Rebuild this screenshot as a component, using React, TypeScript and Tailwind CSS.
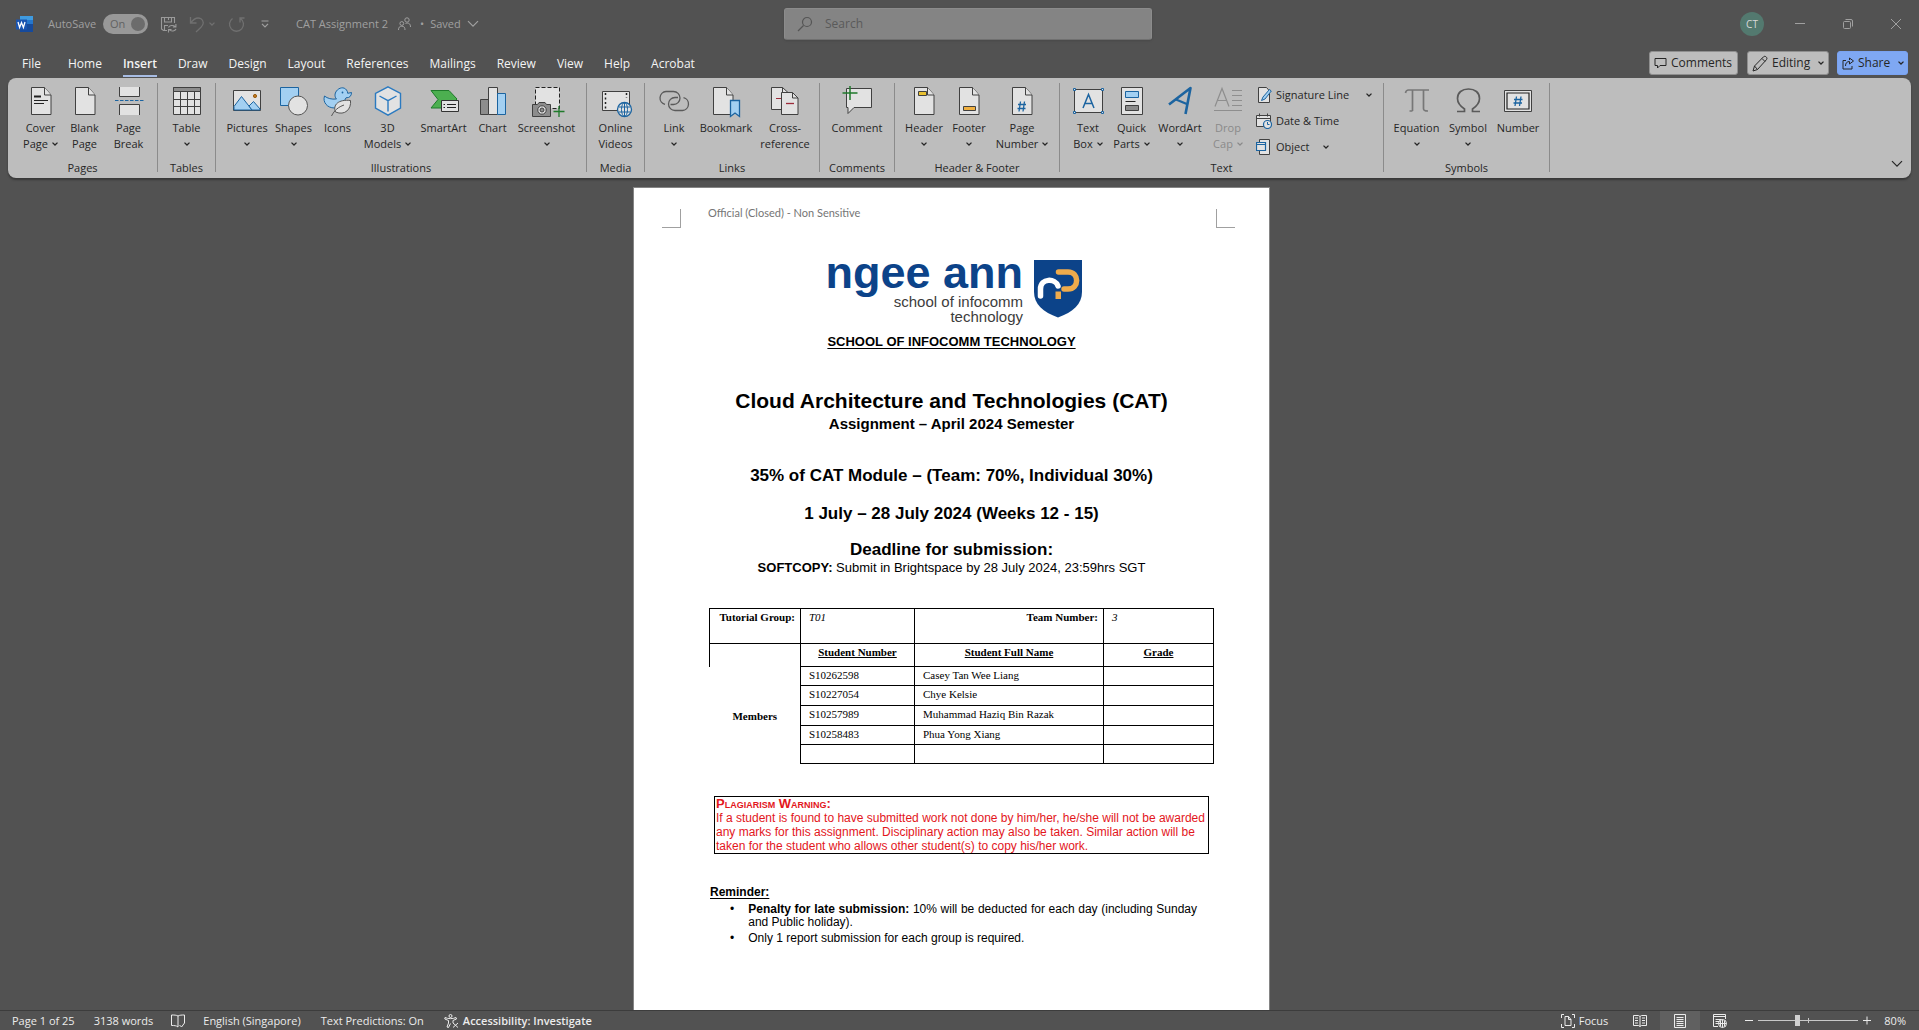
import type { ReactNode } from "react";

const INK = "#404040";
const PAPER = "#e2e2e2";
const BLUE = "#1c64a0";
const SKY = "#a3d0f2";

function Chevron({ className = "" }: { className?: string }) {
  return (
    <svg width="6" height="4" viewBox="0 0 6 4" fill="none" stroke="currentColor" strokeWidth="1.3" className={"shrink-0 " + className} aria-hidden="true">
      <path d="M.5 .6 3 3 5.500 .6" />
    </svg>
  );
}

function WideChevron() {
  return (
    <svg width="12" height="8" viewBox="0 0 12 8" fill="none" stroke="currentColor" strokeWidth="1.2" aria-hidden="true">
      <path d="M1 1.2 6 6.2 11 1.2" />
    </svg>
  );
}

function Art({ children }: { children: ReactNode }) {
  return (
    <svg width="32" height="30" viewBox="0 0 32 30" fill="none" stroke={INK} strokeWidth="1" aria-hidden="true" className="shrink-0 overflow-visible">
      {children}
    </svg>
  );
}

function Sheet({ x = 6 }: { x?: number }) {
  return (
    <g transform={`translate(${x} 0)`}>
      <path d="M.5 1.5h13l6.5 7.5v19.5H.5z" fill={PAPER} />
      <path d="M13.5 1.5V9H20" fill={PAPER} />
    </g>
  );
}

const art = {
  cover: (
    <Art>
      <Sheet />
      <path d="M9 10.5h7" stroke="#222" strokeWidth="2" />
      <path d="M9 14.5h14M9 17.5h10" stroke="#222" />
    </Art>
  ),
  blank: (
    <Art>
      <Sheet />
    </Art>
  ),
  pageBreak: (
    <Art>
      <path d="M6.500 1v9.500h20V1M6.500 29V18.500h20V29" fill={PAPER} />
      <path d="M2 14.500h29" stroke={BLUE} strokeDasharray="3.500 1.500" />
    </Art>
  ),
  table: (
    <Art>
      <path d="M2.500 1.500h27v27h-27z" fill={PAPER} />
      <path d="M2.500 1.500h27v4h-27z" fill="#8c8c8c" />
      <path d="M2.500 13.500h27M2.500 20.500h27M9.500 5.500v23M16.500 5.500v23M23.500 5.500v23" />
    </Art>
  ),
  pictures: (
    <Art>
      <path d="M2.500 4.500h27v20h-27z" fill={PAPER} />
      <path d="M3 20.500 10.500 10.500 21 24H3z" fill={SKY} stroke={BLUE} />
      <path d="M18 20 22.500 15.500 29 23V24H21z" fill={SKY} stroke={BLUE} />
      <circle cx="24" cy="10" r="1.600" fill="#c07a20" stroke="#9a5c10" />
    </Art>
  ),
  shapes: (
    <Art>
      <path d="M2.500 1.500h18v18h-18z" fill={SKY} stroke={BLUE} />
      <circle cx="20" cy="19.500" r="9.500" fill={PAPER} stroke="#555" />
    </Art>
  ),
  icons: (
    <Art>
      <path d="M2.500 10c3 2.500 7 3.500 12 3-2-2-2-5.500 0-8 2.500-3.500 7.500-4.500 10-1 .8 1 1.200 2.200 1.200 3.300L29.500 6.500c0 3.500-2 5.500-5.500 5.300-1 2-1.500 2.500-2 4C21 20 17 22 12.500 22 5 22 .5 16 2.500 10z" fill={SKY} stroke={BLUE} />
      <circle cx="20.500" cy="6.500" r=".9" fill={BLUE} stroke="none" />
      <path d="M13.500 26c-3-7 3-13 15-11.500C29.500 23 23 30 13.500 26z" fill={PAPER} stroke="#555" />
      <path d="M9.500 30c3-6 7-9 12.500-11" stroke="#555" />
    </Art>
  ),
  cube: (
    <Art>
      <path d="M16 .8 28.500 7.500v14.500L16 29.200 3.500 22V7.500z" fill={PAPER} stroke="#2b7ac0" strokeWidth="1.400" />
      <path d="M7.500 10 16 14.700 24.500 10M16 14.700V25.500" stroke="#2b7ac0" strokeWidth="1.400" />
    </Art>
  ),
  smartArt: (
    <Art>
      <path d="M3 4.500h18l8 8.500-9 9H3l7-8.500z" fill="#4caf50" stroke="#1f7a2b" />
      <path d="M13.500 14.500h17v11h-17z" fill={PAPER} stroke="#333" />
      <path d="M19 18.500h9M19 21.500h9M15.500 18.500h1.500M15.500 21.500h1.500" stroke="#222" />
    </Art>
  ),
  chart: (
    <Art>
      <path d="M3.500 13.500h8v15h-8z" fill="#8c8c8c" />
      <path d="M11.500 1.500h9v27h-9z" fill={PAPER} />
      <path d="M20.500 7.500h8v21h-8z" fill={SKY} stroke={BLUE} />
    </Art>
  ),
  screenshot: (
    <Art>
      <path d="M4.500 1.500h24v21h-24z" fill={PAPER} stroke="#222" strokeDasharray="4 2" />
      <path d="M1.500 18.500h5l1.500-2h6l1.500 2h4v12h-18z" fill="#8c8c8c" />
      <circle cx="11" cy="24" r="4.200" fill={PAPER} />
      <circle cx="11" cy="24" r="2" fill="#8c8c8c" />
      <path d="M28 20v11M22.500 25.500h11" stroke="#1f7a2b" strokeWidth="1.300" />
    </Art>
  ),
  onlineVideos: (
    <Art>
      <path d="M2.500 5.500h27v19h-27z" fill={PAPER} />
      <path d="M5.500 7v17M26.500 7v5" strokeWidth="1.500" strokeDasharray="2 2.500" stroke="#222" />
      <circle cx="24.500" cy="23.500" r="7" fill={PAPER} stroke={BLUE} strokeWidth="1.300" />
      <ellipse cx="24.500" cy="23.500" rx="3" ry="7" stroke={BLUE} />
      <path d="M18.500 21h12M18.500 26h12M24.500 16.500v14" stroke={BLUE} />
    </Art>
  ),
  link: (
    <Art>
      <g stroke="#5a5a5a" strokeWidth="1.300">
        <path d="M7 18.300a6.500 6.500 0 0 1 1-12.800h7.500a6.500 6.500 0 0 1 0 13h-3" />
        <path d="M25.500 11.700a6.500 6.500 0 0 1-1 12.800H17a6.500 6.500 0 0 1 0-13h3" />
      </g>
    </Art>
  ),
  bookmark: (
    <Art>
      <Sheet x={3} />
      <path d="M20.500 14.500h9v16L25 27l-4.500 3.500z" fill={SKY} stroke={BLUE} strokeWidth="1.300" />
    </Art>
  ),
  crossRef: (
    <Art>
      <path d="M2.500 1.500h11l5.500 5v17H2.500z" fill={PAPER} />
      <path d="M13.500 1.500v5H19" />
      <path d="M7 12.500h5" stroke="#9c2b3a" />
      <path d="M12.500 6.500h11l5.500 5.500v16.500H12.500z" fill={PAPER} />
      <path d="M23.500 6.500V12H29" />
      <path d="M17 17.500h8" stroke="#9c2b3a" strokeWidth="1.300" />
    </Art>
  ),
  comment: (
    <Art>
      <path d="M5.500 2.500h25v19H13l-6 6v-6H5.500z" fill={PAPER} />
      <path d="M9 0v14M1.500 7h15" stroke="#1f7a2b" strokeWidth="1.500" />
    </Art>
  ),
  header: (
    <Art>
      <Sheet />
      <path d="M10.500 5.500h8v4h-8z" fill="#e8c030" />
    </Art>
  ),
  footer: (
    <Art>
      <Sheet />
      <path d="M10.500 20.500h12v4h-12z" fill="#f0b040" />
    </Art>
  ),
  pageNumber: (
    <Art>
      <Sheet />
      <path d="M14.500 15.500 13 25.500M18.500 15.500 17 25.500M12 18.500h8M11.500 22.500h8" stroke={BLUE} strokeWidth="1.300" />
    </Art>
  ),
  textBox: (
    <Art>
      <path d="M2.500 3.500h28v23h-28z" fill={PAPER} />
      <path d="M11 22 16.500 8.500 22 22M13 17.500h7" stroke={BLUE} strokeWidth="1.500" />
      <path d="M1.500 2.500h2v2h-2zM29.500 2.500h2v2h-2zM1.500 25.500h2v2h-2zM29.500 25.500h2v2h-2z" fill={PAPER} stroke={BLUE} />
    </Art>
  ),
  quickParts: (
    <Art>
      <path d="M5.500 1.500h21v27h-21z" fill={PAPER} />
      <path d="M9.500 5.500h13v6h-13z" fill={SKY} stroke={BLUE} />
      <path d="M9.500 15.500h10" stroke="#222" />
      <path d="M9.500 19.500h13v5h-13z" fill="#8c8c8c" />
    </Art>
  ),
  wordArt: (
    <Art>
      <path d="M5 18.500 26.500 2 21.500 28" stroke={BLUE} strokeWidth="2.600" strokeLinejoin="round" />
      <path d="M12 13.500 24 18.500" stroke={BLUE} strokeWidth="2.200" />
    </Art>
  ),
  dropCap: (
    <Art>
      <g stroke="#8e8e8e" strokeWidth="1.200">
        <path d="M3 20.500 10 2.500 17 20.500M5.500 14.500h9M2 24.500h28M20 4.500h10M20 9.500h10M20 14.500h10M20 19.500h10" />
      </g>
    </Art>
  ),
  equation: (
    <Art>
      <path d="M4.500 7c.5-2.500 1-3 3-3h20.500M11.500 4v21M11.500 25H8.500M22.500 4v18.500c0 2 1 2.500 4.500 2.500" stroke="#777" strokeWidth="1.700" />
    </Art>
  ),
  omega: (
    <Art>
      <path d="M5 25.500h7.500v-2.500C8 20 5.500 17 5.500 12.500 5.500 6.500 10 3 16.500 3S27.500 6.500 27.500 12.500C27.500 17 25 20 20.500 23v2.500H28" stroke="#5a5a5a" strokeWidth="1.700" />
    </Art>
  ),
  number: (
    <Art>
      <path d="M2.500 4.500h27v21h-27z" fill={PAPER} />
      <path d="M5 7h22v16H5z" stroke="#222" strokeWidth="1.200" />
      <path d="M14.500 10.500 13 20M19 10.500 17.500 20M12 13.500h8.500M11.500 17h8.500" stroke={BLUE} strokeWidth="1.300" />
    </Art>
  ),
};

type Item = {
  icon: ReactNode;
  lines: string[];
  width: string;
  menu?: "inline" | "below";
  disabled?: boolean;
};

function RibbonButton({ icon, lines, width, menu, disabled }: Item) {
  return (
    <button
      disabled={disabled}
      className={"flex shrink-0 flex-col items-center text-[11px] leading-4 whitespace-nowrap " + width + (disabled ? " text-[#8a8a8a]" : " text-[#262626]")}
    >
      <span className="mb-1 flex h-[30px] items-center justify-center">{icon}</span>
      <span>{lines[0]}</span>
      {lines[1] && (
        <span className="flex items-center gap-1">
          {lines[1]}
          {menu === "inline" && <Chevron />}
        </span>
      )}
      {menu === "below" && (
        <span className="flex h-4 items-center">
          <Chevron />
        </span>
      )}
    </button>
  );
}

function Group({ name, width, inset = "", children }: { name: string; width: string; inset?: string; children: ReactNode }) {
  return (
    <section aria-label={name} className={"flex shrink-0 pt-[5px] pb-[6px] " + width}>
      <div className="flex flex-1 flex-col justify-between border-r border-[#8b8b8b]">
        <div className={"flex h-[78px] items-start justify-center pt-[3px] " + inset}>{children}</div>
        <h2 className="text-center text-[11px] leading-[8px] text-[#262626]">{name}</h2>
      </div>
    </section>
  );
}

const groups: { name: string; width: string; inset?: string; items: Item[] }[] = [
  {
    name: "Pages",
    width: "w-[150px]",
    inset: "pl-1",
    items: [
      { icon: art.cover, lines: ["Cover", "Page"], width: "w-[44px]", menu: "inline" },
      { icon: art.blank, lines: ["Blank", "Page"], width: "w-[44px]" },
      { icon: art.pageBreak, lines: ["Page", "Break"], width: "w-[44px]" },
    ],
  },
  { name: "Tables", width: "w-[58px]", items: [{ icon: art.table, lines: ["Table"], width: "w-[44px]", menu: "below" }] },
  {
    name: "Illustrations",
    width: "w-[371px]",
    items: [
      { icon: art.pictures, lines: ["Pictures"], width: "w-[50px]", menu: "below" },
      { icon: art.shapes, lines: ["Shapes"], width: "w-[43px]", menu: "below" },
      { icon: art.icons, lines: ["Icons"], width: "w-[45px]" },
      { icon: art.cube, lines: ["3D", "Models"], width: "w-[55px]", menu: "inline" },
      { icon: art.smartArt, lines: ["SmartArt"], width: "w-[57px]" },
      { icon: art.chart, lines: ["Chart"], width: "w-[41px]" },
      { icon: art.screenshot, lines: ["Screenshot"], width: "w-[67px]", menu: "below" },
    ],
  },
  { name: "Media", width: "w-[58px]", items: [{ icon: art.onlineVideos, lines: ["Online", "Videos"], width: "w-[44px]" }] },
  {
    name: "Links",
    width: "w-[175px]",
    inset: "pl-0.5",
    items: [
      { icon: art.link, lines: ["Link"], width: "w-[48px]", menu: "below" },
      { icon: art.bookmark, lines: ["Bookmark"], width: "w-[56px]" },
      { icon: art.crossRef, lines: ["Cross-", "reference"], width: "w-[62px]" },
    ],
  },
  { name: "Comments", width: "w-[75px]", items: [{ icon: art.comment, lines: ["Comment"], width: "w-[56px]" }] },
  {
    name: "Header & Footer",
    width: "w-[165px]",
    items: [
      { icon: art.header, lines: ["Header"], width: "w-[46px]", menu: "below" },
      { icon: art.footer, lines: ["Footer"], width: "w-[44px]", menu: "below" },
      { icon: art.pageNumber, lines: ["Page", "Number"], width: "w-[62px]", menu: "inline" },
    ],
  },
];

const textItems: Item[] = [
  { icon: art.textBox, lines: ["Text", "Box"], width: "w-[42px]", menu: "inline" },
  { icon: art.quickParts, lines: ["Quick", "Parts"], width: "w-[45px]", menu: "inline" },
  { icon: art.wordArt, lines: ["WordArt"], width: "w-[52px]", menu: "below" },
  { icon: art.dropCap, lines: ["Drop", "Cap"], width: "w-[44px]", menu: "inline", disabled: true },
];

const symbolItems: Item[] = [
  { icon: art.equation, lines: ["Equation"], width: "w-[53px]", menu: "below" },
  { icon: art.omega, lines: ["Symbol"], width: "w-[50px]", menu: "below" },
  { icon: art.number, lines: ["Number"], width: "w-[50px]" },
];

function SmallArt({ children }: { children: ReactNode }) {
  return (
    <svg width="16" height="16" viewBox="0 0 16 16" fill="none" stroke={INK} aria-hidden="true" className="shrink-0">
      {children}
    </svg>
  );
}

function TextRows() {
  const row = "flex h-[26px] items-center text-[11px] text-[#262626] whitespace-nowrap";
  return (
    <div className="-mt-1 ml-1.5 flex w-[120px] flex-col">
      <button className={row}>
        <SmallArt>
          <path d="M2.500.5h8l3 3.500v11.500h-11z" fill={PAPER} />
          <path d="M5.500 13.500 7 10l6.500-7.500 1.800 1.500L9 12z" fill={SKY} stroke={BLUE} />
        </SmallArt>
        <span className="ml-1 flex-1 text-left">Signature Line</span>
        <Chevron className="mr-1" />
      </button>
      <button className={row}>
        <SmallArt>
          <path d="M.5 2.500h14v11H.5zM.5 5.500h14M3.500.5v3M11.500.5v3" fill={PAPER} />
          <circle cx="11.500" cy="11.500" r="4" fill={PAPER} stroke={BLUE} strokeWidth="1.200" />
          <path d="M11.500 9v2.500h2" stroke={BLUE} />
        </SmallArt>
        <span className="ml-1">Date &amp; Time</span>
      </button>
      <button className={row}>
        <SmallArt>
          <path d="M3.500.5h10v15h-10z" fill={PAPER} />
          <path d="M.5 3.500h9v8H.5zM.5 5.500h9" fill={PAPER} stroke={BLUE} strokeWidth="1.200" />
        </SmallArt>
        <span className="ml-1">Object</span>
        <Chevron className="ml-3.5" />
      </button>
    </div>
  );
}

function TitleBar() {
  return (
    <header className="grid h-12 shrink-0 grid-cols-[784fr_368fr_767fr] items-center text-[#a0a0a0]">
      <div className="flex items-center pl-4 text-[11px]">
        <svg width="17" height="18" viewBox="0 0 17 18" aria-hidden="true">
          <path d="M4 1h13v5H4z" fill="#3f9be0" />
          <path d="M4 5h13v5H4z" fill="#2576cc" />
          <path d="M4 9h13v8H4z" fill="#164a9c" />
          <path d="M0 4.500h11v10H0z" fill="#1a54b0" />
          <path d="M2 7l1.600 5.500L5.500 7.500l1.900 5L9 7" fill="none" stroke="#fff" strokeWidth="1.300" />
        </svg>
        <label className="ml-[15px] flex items-center gap-[7px]">
          AutoSave
          <input type="checkbox" defaultChecked className="sr-only" />
          <span className="flex h-5 w-[45px] items-center justify-between rounded-full bg-[#989898] pr-[3px] pl-[7px] text-[#626262]">
            On
            <span className="size-[14px] rounded-full bg-[#6c6c6c]" />
          </span>
        </label>
        <button aria-label="Save" className="ml-3">
          <svg width="17" height="17" viewBox="0 0 17 17" fill="none" stroke="#9a9a9a" strokeWidth="1.100" aria-hidden="true">
            <path d="M7 14.500H3.500L1.500 13V1.500h13V7M4.500 1.500V6h7V1.500M8.500 1.500V4M4.500 14.500V9.500H8" />
            <path d="M8.500 11.500c.8-2 4.500-3 7-.7M15.900 8v3h-3M16 13c-.8 2-4.500 3-7 .7M8.500 16.500v-3h3" />
          </svg>
        </button>
        <button aria-label="Undo" className="ml-3 flex items-center gap-1 text-[#707070]">
          <svg width="16" height="17" viewBox="0 0 16 17" fill="none" stroke="currentColor" strokeWidth="1.300" aria-hidden="true">
            <path d="M1.500 1v6h6M1.500 7C5 2.500 8.500.8 12 2.800c3.500 2.500 2.500 6 0 8.500L7 16" />
          </svg>
          <Chevron />
        </button>
        <button aria-label="Repeat" className="ml-[13px] text-[#707070]">
          <svg width="17" height="17" viewBox="0 0 17 17" fill="none" stroke="currentColor" strokeWidth="1.300" aria-hidden="true">
            <path d="M4.500 2.500A7 7 0 1 0 12.500 2.500M12 6.500V2h4.500" />
          </svg>
        </button>
        <button aria-label="Customize toolbar" className="ml-4">
          <svg width="8" height="8" viewBox="0 0 8 8" fill="none" stroke="currentColor" strokeWidth="1.200" aria-hidden="true">
            <path d="M.5 1h7M1 3.800l3 3 3-3" />
          </svg>
        </button>
        <span className="ml-[27px]">CAT Assignment 2</span>
        <svg width="13" height="14" viewBox="0 0 13 14" fill="none" stroke="currentColor" strokeWidth="1" aria-hidden="true" className="ml-2.5">
          <circle cx="9" cy="3" r="2.200" />
          <circle cx="3.800" cy="6.500" r="1.900" />
          <path d="M.5 13c0-2.500 1-3.800 3.300-3.800S7 10.500 7 13M7.500 6.500c3-1 5 0 5 3.500" />
        </svg>
        <button className="ml-[9px] flex items-center gap-[6px]">
          <span>•</span>
          <span>Saved</span>
          <WideChevron />
        </button>
      </div>
      <div className="flex h-8 items-center rounded-[3px] border border-[#8c8c8c] border-b-[#707070] bg-[#848484] pl-3 shadow-sm">
        <svg width="16" height="16" viewBox="0 0 16 16" fill="none" stroke="#555" strokeWidth="1.200" aria-hidden="true">
          <circle cx="10" cy="6" r="4.500" />
          <path d="M6.500 9.500 1 15" />
        </svg>
        <input type="text" aria-label="Search" placeholder="Search" className="ml-3 min-w-0 flex-1 bg-transparent text-[12px] outline-none placeholder:text-[#5a5a5a]" />
      </div>
      <div className="flex items-center justify-end pr-[18px]">
        <button aria-label="Account CT" className="flex size-6 items-center justify-center rounded-full bg-[#53796f] text-[10px] text-[#d8d8d8]">CT</button>
        <button aria-label="Minimize" className="ml-[31px]">
          <svg width="10" height="10" viewBox="0 0 10 10" stroke="currentColor" aria-hidden="true"><path d="M0 4.500h10" /></svg>
        </button>
        <button aria-label="Restore" className="ml-[38px]">
          <svg width="10" height="10" viewBox="0 0 10 10" fill="none" stroke="currentColor" aria-hidden="true">
            <rect x=".5" y="2.500" width="7" height="7" rx="1" />
            <path d="M2.500.5H8a1.500 1.500 0 0 1 1.500 1.500v5.500" />
          </svg>
        </button>
        <button aria-label="Close" className="ml-[38px]">
          <svg width="10" height="10" viewBox="0 0 10 10" stroke="currentColor" aria-hidden="true"><path d="M0 0l10 10M10 0 0 10" /></svg>
        </button>
      </div>
    </header>
  );
}

const tabs = ["Home", "Insert", "Draw", "Design", "Layout", "References", "Mailings", "Review", "View", "Help", "Acrobat"];

function TabBar() {
  const action = "flex h-6 items-center rounded-[3px] border text-[12px] text-[#262626]";
  return (
    <nav className="flex h-[30px] shrink-0 items-center justify-between pr-[11px] pl-[22px] text-[12px] text-[#f4f4f4]">
      <div className="flex items-center gap-[21px] pt-px">
        <button className="mr-[6px]">File</button>
        {tabs.map((t) => (
          <button key={t} className={t === "Insert" ? "border-y-2 border-t-transparent border-b-[#a8bde4] leading-[22px] font-semibold" : "leading-6"}>
            {t}
          </button>
        ))}
      </div>
      <div className="flex items-center">
        <button className={action + " w-[89px] gap-1 border-[#8f8f8f] bg-[#bdbdbd] pl-1"}>
          <svg width="13" height="12" viewBox="0 0 13 12" fill="none" stroke="currentColor" aria-hidden="true"><path d="M1 1.500h11v7H6L3.500 11V8.500H1z" /></svg>
          Comments
        </button>
        <button className={action + " ml-[9px] w-[82px] gap-1 border-[#8f8f8f] bg-[#bdbdbd] pl-1"}>
          <svg width="16" height="17" viewBox="0 0 16 17" fill="none" stroke="currentColor" aria-hidden="true">
            <path d="M1 16l1.500-5L11.500 1.800c1.500-1.500 4.500.8 3 2.800L5.500 14.500zM10 3.500l3 3M2.500 11l3 3.500" />
          </svg>
          Editing
          <Chevron className="ml-1" />
        </button>
        <button className={action + " ml-2 w-[71px] gap-1 border-[#7aa3f2] bg-[#7fa8f3] pl-1"}>
          <svg width="12" height="13" viewBox="0 0 12 13" fill="none" stroke="currentColor" aria-hidden="true">
            <path d="M4 3.500H1v8.500h9V9M3.500 9c0-3 1.500-4.500 4-4.500V7L11.500 4 7.500 1v2" />
          </svg>
          Share
          <Chevron className="ml-1" />
        </button>
      </div>
    </nav>
  );
}

function Ribbon() {
  return (
    <div className="mx-2 flex h-[100px] shrink-0 rounded-lg bg-[#bdbdbd] shadow-[0_2px_2px_#383838]">
      {groups.map((g) => (
        <Group key={g.name} name={g.name} width={g.width} inset={g.inset}>
          {g.items.map((i) => (
            <RibbonButton key={i.lines.join(" ")} {...i} />
          ))}
        </Group>
      ))}
      <Group name="Text" width="w-[324px]">
        {textItems.map((i) => (
          <RibbonButton key={i.lines.join(" ")} {...i} />
        ))}
        <TextRows />
      </Group>
      <Group name="Symbols" width="w-[166px]">
        {symbolItems.map((i) => (
          <RibbonButton key={i.lines[0]} {...i} />
        ))}
      </Group>
      <button aria-label="Collapse ribbon" className="mt-auto mr-2 mb-[10px] ml-auto text-[#262626]">
        <WideChevron />
      </button>
    </div>
  );
}

function Shield() {
  return (
    <svg width="48" height="58" viewBox="0 0 48 58" fill="none" aria-label="NP" role="img">
      <path d="M0 0h48v32c0 12-9 20-24 25.500C9 52 0 44 0 32z" fill="#0c4389" />
      <path d="M6.500 36v-7c0-11 15-11 17.500-3" stroke="#fff" strokeWidth="5.500" strokeLinecap="round" />
      <path d="M24.500 12H34c11.500 0 11.500 17 0 17h-4" stroke="#efab4c" strokeWidth="5.500" strokeLinecap="round" />
      <path d="M21.500 31.500h5.500V39h-5.500z" fill="#efab4c" />
    </svg>
  );
}

const members = [
  ["S10262598", "Casey Tan Wee Liang", "h-[19px]"],
  ["S10227054", "Chye Kelsie", "h-[20px]"],
  ["S10257989", "Muhammad Haziq Bin Razak", "h-[20px]"],
  ["S10258483", "Phua Yong Xiang", "h-[19px]"],
  ["", "", "h-[19px]"],
];

function MembersTable() {
  const cell = "border border-black px-2 text-left align-top font-normal";
  const head = "border border-black pt-[2px] text-center align-top font-bold underline";
  return (
    <table className="mt-8 ml-[75px] w-[505px] table-fixed border-collapse font-['Liberation_Serif',serif] text-[11px] leading-[13px]">
      <colgroup>
        <col className="w-[91px]" />
        <col className="w-[114px]" />
        <col className="w-[189px]" />
        <col />
      </colgroup>
      <tbody>
        <tr className="h-[35px]">
          <th className="border border-black pt-[2px] pr-[5px] text-right align-top whitespace-nowrap">Tutorial Group:</th>
          <td className={cell + " pt-[2px] italic"}>T01</td>
          <th className="border border-black pt-[2px] pr-[5px] text-right align-top">Team Number:</th>
          <td className={cell + " pt-[2px] italic"}>3</td>
        </tr>
        <tr className="h-[23px]">
          <td className="border-t border-l border-black" />
          <th className={head}>Student Number</th>
          <th className={head}>Student Full Name</th>
          <th className={head}>Grade</th>
        </tr>
        {members.map(([id, name, h], i) => (
          <tr key={i} className={h}>
            {i === 0 && (
              <th rowSpan={5} className="pt-[2px] align-middle">
                Members
              </th>
            )}
            <td className={cell + " pt-[2px]"}>{id}</td>
            <td className={cell + " pt-[2px]"}>{name}</td>
            <td className={cell} />
          </tr>
        ))}
      </tbody>
    </table>
  );
}

function Page() {
  return (
    <article className="w-[635px] bg-white font-['Liberation_Sans',sans-serif] text-black shadow-[0_0_0_1px_#858585]">
      <div className="flex items-start pt-[17px] pr-[34px] pl-[28px]">
        <span className="mt-1 h-[19px] w-[19px] border-r border-b border-[#a0a0a0]" />
        <span className="ml-[27px] flex-1 font-[Lato,sans-serif] text-[11px] leading-4 text-[#757575]">Official (Closed) - Non Sensitive</span>
        <span className="mt-1 h-[19px] w-[19px] border-b border-l border-[#a0a0a0]" />
      </div>
      <div className="mt-[25px] ml-[190px] flex w-[258px] gap-[11px]">
        <div className="flex-1 text-right text-[15px] leading-[15px] text-[#3c3c3c]">
          <div className="mb-px text-[45px] leading-10 font-bold whitespace-nowrap text-[#0c4389]">ngee ann</div>
          <div>school of infocomm</div>
          <div>technology</div>
        </div>
        <div className="mt-[7px]">
          <Shield />
        </div>
      </div>
      <div className="text-center font-bold">
        <p className="mt-[10px] text-[13px] leading-4 underline underline-offset-2">SCHOOL OF INFOCOMM TECHNOLOGY</p>
        <h1 className="mt-[39px] text-[21px] leading-6">Cloud Architecture and Technologies (CAT)</h1>
        <p className="text-[15px] leading-[22px]">Assignment – April 2024 Semester</p>
        <p className="mt-[31px] text-[17px] leading-5">35% of CAT Module – (Team: 70%, Individual 30%)</p>
        <p className="mt-[18px] text-[17px] leading-5">1 July – 28 July 2024 (Weeks 12 - 15)</p>
        <p className="mt-4 text-[17px] leading-5">Deadline for submission:</p>
        <p className="text-[13px] leading-4">
          SOFTCOPY: <span className="font-normal">Submit in Brightspace by 28 July 2024, 23:59hrs SGT</span>
        </p>
      </div>
      <MembersTable />
      <div className="mt-8 ml-20 w-[495px] border border-black pl-px text-[12px] leading-[14px] text-[#e3161c]">
        <h2 className="text-[13px] leading-[14px] font-bold [font-variant-caps:small-caps]">Plagiarism Warning:</h2>
        <p>
          If a student is found to have submitted work not done by him/her, he/she will not be awarded any marks for this assignment. Disciplinary action may also be taken. Similar action will be taken for the student who allows other student(s) to copy his/her work.
        </p>
      </div>
      <h2 className="mt-[31px] ml-[76px] text-[12px] leading-[14px] font-bold underline underline-offset-2">Reminder:</h2>
      <ul className="mt-1 mr-[72px] ml-24 flex flex-col gap-[3px] pb-20 text-[12px] leading-[13px]">
        <li className="flex gap-[14px]">
          <span>•</span>
          <p className="text-justify">
            <b>Penalty for late submission:</b> 10% will be deducted for each day (including Sunday and Public holiday).
          </p>
        </li>
        <li className="flex gap-[14px]">
          <span>•</span>
          <p>Only 1 report submission for each group is required.</p>
        </li>
      </ul>
    </article>
  );
}

function StatusBar() {
  return (
    <footer className="flex h-5 shrink-0 items-center border-t border-[#3c3c3c] pr-[13px] pl-3 text-[11px] leading-4 whitespace-nowrap text-[#ececec]">
      <button>Page 1 of 25</button>
      <button className="ml-[19px]">3138 words</button>
      <button aria-label="Proofing" className="ml-[18px]">
        <svg width="14" height="14" viewBox="0 0 14 14" fill="none" stroke="currentColor" aria-hidden="true">
          <path d="M7 2v11M7 2C5.500 1 3 1 .5 1v10.500c2.500 0 5 0 6.500 1.500M7 2c1.500-1 4-1 6.500-1v8M8.500 11l2 2 3-4" />
        </svg>
      </button>
      <button className="ml-[18px]">English (Singapore)</button>
      <button className="ml-5">Text Predictions: On</button>
      <button className="ml-5 flex items-center gap-1 font-semibold">
        <svg width="15" height="14" viewBox="0 0 15 14" fill="none" stroke="currentColor" aria-hidden="true">
          <circle cx="6.500" cy="2" r="1.500" />
          <path d="M1 3.500c3 1.500 8 1.500 11 0l.5 1.500-3.500 1.500V9M1 3.500 .8 5l3.700 1.500V9L3 13l1.500.5L6.500 9.500M9 9l5 4.500M14 9l-5 4.500" />
        </svg>
        Accessibility: Investigate
      </button>
      <div className="ml-auto flex items-center self-stretch">
        <button className="flex items-center gap-1">
          <svg width="14" height="14" viewBox="0 0 14 14" fill="none" stroke="currentColor" aria-hidden="true">
            <path d="M3 .5H.5V4M11 .5h2.500V4M3 13.500H.5V10M11 13.500h2.500V10M4 2.500h3.500l2.500 3v6H4zM7.500 2.500v3H10" />
          </svg>
          Focus
        </button>
        <button aria-label="Read mode" className="ml-[12px] flex w-[40px] items-center justify-center self-stretch">
          <svg width="14" height="13" viewBox="0 0 14 13" fill="none" stroke="currentColor" aria-hidden="true">
            <path d="M.5 1.500h5L7 2.500 8.500 1.500h5v10h-5L7 12.500 5.500 11.500h-5zM7 2.500v10M2 4h3M2 6.500h3M2 9h3M9 4h3M9 6.500h3M9 9h3" />
          </svg>
        </button>
        <button aria-label="Print layout" className="flex w-10 items-center justify-center self-stretch bg-[#606060]">
          <svg width="12" height="14" viewBox="0 0 12 14" fill="none" stroke="currentColor" aria-hidden="true">
            <path d="M.5 .5h11v13H.5zM2.500 3.500h7M2.500 5.500h7M2.500 7.500h7M2.500 9.500h7M2.500 11.500h7" />
          </svg>
        </button>
        <button aria-label="Web layout" className="flex w-10 items-center justify-center self-stretch">
          <svg width="14" height="14" viewBox="0 0 14 14" fill="none" stroke="currentColor" aria-hidden="true">
            <path d="M5 12.500H.5V.5h12V5M.5 2.500h12M2.500 5.500h6M2.500 7.500h4M2.500 9.500h3" />
            <circle cx="9.500" cy="9.500" r="4" />
            <path d="M9.500 5.500v8M5.500 9.500h8M7.500 6.500v6M11.500 6.500v6" />
          </svg>
        </button>
        <button aria-label="Zoom out" className="ml-1">
          <svg width="10" height="10" viewBox="0 0 10 10" stroke="currentColor" aria-hidden="true"><path d="M1 4.500h8" /></svg>
        </button>
        <div className="relative ml-1 flex items-center">
          <input
            type="range"
            aria-label="Zoom"
            min={0}
            max={100}
            defaultValue={39}
            className="h-3 w-[100px] appearance-none bg-[linear-gradient(#c8c8c8,#c8c8c8)] bg-[length:100%_1px] bg-center bg-no-repeat [&::-webkit-slider-thumb]:h-[11px] [&::-webkit-slider-thumb]:w-[5px] [&::-webkit-slider-thumb]:appearance-none [&::-webkit-slider-thumb]:bg-[#d0d0d0]"
          />
          <span className="pointer-events-none absolute left-1/2 h-[5px] w-px bg-[#c8c8c8]" />
        </div>
        <button aria-label="Zoom in" className="ml-1">
          <svg width="10" height="10" viewBox="0 0 10 10" stroke="currentColor" aria-hidden="true"><path d="M1 4.500h8M5 .5v8" /></svg>
        </button>
        <button className="ml-3">80%</button>
      </div>
    </footer>
  );
}

export default function App() {
  return (
    <div className="flex h-screen flex-col overflow-hidden bg-[#525252] font-['Open_Sans','Noto_Sans',sans-serif]">
      <TitleBar />
      <TabBar />
      <Ribbon />
      <main className="flex min-h-0 flex-1 justify-center overflow-hidden pt-[10px] pr-4">
        <Page />
      </main>
      <StatusBar />
    </div>
  );
}
